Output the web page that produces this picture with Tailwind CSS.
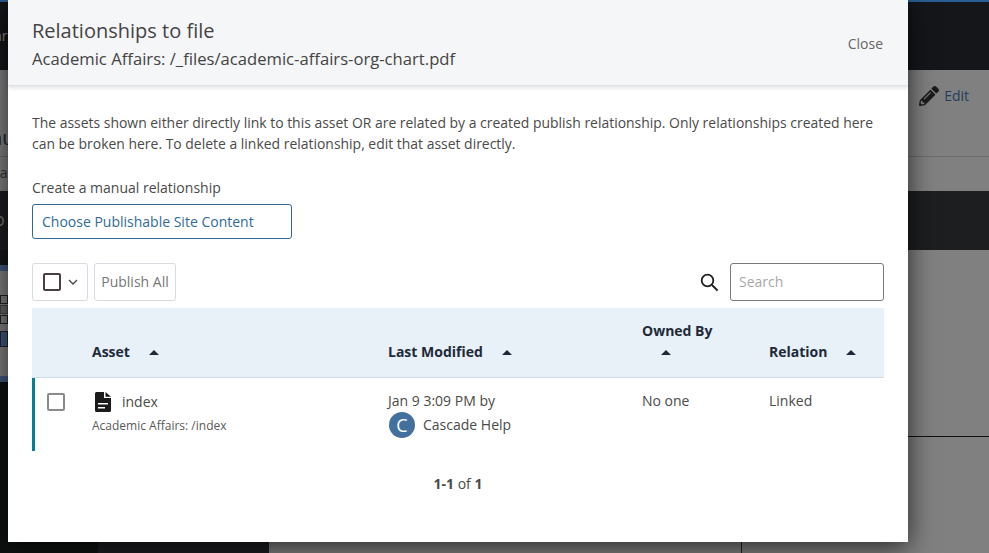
<!DOCTYPE html>
<html lang="en">
<head>
    <meta charset="UTF-8">
    <title>Relationships to file</title>
    <script src="https://cdn.jsdelivr.net/npm/@tailwindcss/browser@4"></script>
</head>
<body class="font-['Open_Sans',sans-serif] overflow-hidden">
<div class="relative w-[989px] h-[553px] overflow-hidden bg-[#808080]">

    <!-- Page behind the modal -->
    <div class="h-[70px] bg-[#14161a] border-t-2 border-[#2a5f96] text-[#8a8f96] text-sm pt-[24px] ml-[-6px]">ar</div>
    <div class="h-[87px] border-b border-[#6c6c6c] flex items-start text-sm">
        <span class="mt-[54px] ml-[-10px] text-[#222] text-xl">nu</span>
        <div class="ml-auto flex items-start pt-[15px] pr-5 gap-[5px] text-[#1f3d5c]">
            <svg class="w-[20px] h-[20px] mt-[1px]" viewBox="0 0 512 512" fill="#1a1a1a"><path d="M497.9 142.1l-46.1 46.1c-4.7 4.7-12.3 4.7-17 0l-111-111c-4.7-4.7-4.7-12.3 0-17l46.1-46.1c18.7-18.7 49.1-18.7 67.9 0l60.1 60.1c18.8 18.7 18.8 49.1 0 67.9zM284.2 99.8L21.6 362.4.4 483.9c-2.9 16.4 11.4 30.6 27.8 27.8l121.5-21.3 262.6-262.6c4.7-4.7 4.7-12.3 0-17l-111-111c-4.8-4.7-12.4-4.7-17.1 0zM124.1 339.9c-5.500-5.500-5.500-14.300 0-19.800l154-154c5.500-5.500 14.300-5.500 19.800 0s5.500 14.300 0 19.800l-154 154c-5.500 5.500-14.300 5.500-19.800 0zM88 424h48v36.300l-64.500 11.300-31.100-31.100L51.700 376H88v48z"/></svg>
            <span class="pt-px">Edit</span>
        </div>
    </div>
    <div class="h-[34px] text-sm text-[#333] pt-[6px] ml-[-7px]">ca</div>
    <div class="h-[59px] bg-[#1d1e20] text-[#777] text-lg pt-[14px] ml-[-6px]">o</div>
    <div class="h-[186px]"></div>
    <div class="h-px bg-[#111] ml-[741px]"></div>

    <!-- Left panel behind the modal -->
    <div class="absolute left-0 top-[250px] w-[269px] h-[303px] bg-[#1d1e20] flex flex-col">
        <div class="h-[15px] bg-[#15171a]"></div>
        <div class="h-[6px] bg-[#3f5a80]"></div>
        <div class="h-[105px] bg-[#808080] pt-[24px] flex flex-col gap-[1px]">
            <div class="w-2 h-[9px] border border-[#222]"></div>
            <div class="w-2 h-[9px] border border-[#444] bg-[#666]"></div>
            <div class="w-2 h-[9px] border border-[#222]"></div>
            <div class="w-2 h-[16px] mt-[6px] border border-[#223] bg-[#3f5a80]"></div>
        </div>
        <div class="h-[6px] bg-[#3f5a80]"></div>
        <div class="flex-1 flex">
            <div class="w-[98px] bg-[#0f1111]"></div>
            <div class="flex-1 bg-[#1d1e20]"></div>
        </div>
    </div>
    <div class="absolute left-[741px] bottom-0 w-px h-[11px] bg-[#222]"></div>

    <!-- Modal -->
    <div class="absolute left-2 top-0 w-[900px] h-[542px] bg-white shadow-[0_5px_25px_rgba(0,0,0,0.7)] text-[#4a4a4a]">
        <div class="h-[86px] bg-[#f5f6f8] border-b border-[#dfe3e8] shadow-[0_2px_4px_rgba(0,0,0,0.12)] pl-6 pr-[25px] flex items-start justify-between">
            <div class="pt-[17px]">
                <h1 class="text-xl leading-7 text-[#444]">Relationships to file</h1>
                <p class="text-[16.65px] leading-6 mt-[2px] text-[#444]">Academic Affairs: /_files/academic-affairs-org-chart.pdf</p>
            </div>
            <button class="text-sm leading-5 text-[#666] mt-[34px]">Close</button>
        </div>

        <div class="px-6">
            <p class="text-[13.95px] leading-[21px] mt-[26px] text-[#4a4a4a]">The assets shown either directly link to this asset OR are related by a created publish relationship. Only relationships created here can be broken here. To delete a linked relationship, edit that asset directly.</p>
            <label class="block text-sm leading-5 mt-6 text-[#4a4a4a]">Create a manual relationship</label>
            <button class="block w-[260px] h-[35px] mt-[6px] border border-[#2f6a99] rounded-[3px] text-left pl-[9px] text-sm text-[#2f6a99]">Choose Publishable Site Content</button>

            <div class="flex items-center mt-6 h-[38px]">
                <div class="w-[56px] h-[38px] border border-[#d8dce1] rounded-[3px] flex items-center pl-[10px] gap-[7px]">
                    <span class="w-[18px] h-[18px] border-2 border-[#4a4044] rounded-[2px]"></span>
                    <svg class="w-[10px] h-[6px]" viewBox="0 0 10 6" fill="none" stroke="#444" stroke-width="1.3"><path d="M1 1l4 4 4-4"/></svg>
                </div>
                <button class="ml-[6px] w-[82px] h-[38px] border border-[#d8dce1] rounded-[3px] text-sm text-[#777]">Publish All</button>
                <svg class="ml-auto w-[19px] h-[19px] mr-[11px]" viewBox="0 0 19 19" fill="none" stroke="#1f1f1f" stroke-width="1.8"><circle cx="7.5" cy="7.5" r="5.8"/><path d="M12 12l5.600 5.600" stroke-width="2"/></svg>
                <input class="w-[154px] h-[38px] border border-[#7a7a7a] rounded-[3px] pl-2 pr-[9px] pb-[2px] text-sm" placeholder="Search">
            </div>

            <table class="w-[852px] mt-[7px] table-fixed border-separate border-spacing-0">
                <thead>
                    <tr class="h-[70px] text-sm text-[#1e2a38]">
                        <th class="w-[60px] bg-[#e8f0f8] border-b border-[#d5dee8]"></th>
                        <th class="w-[296px] bg-[#e8f0f8] border-b border-[#d5dee8] text-left align-bottom pb-[15px] font-bold"><span>Asset</span><span class="inline-block ml-[19px] mb-[2px] border-x-[5px] border-x-transparent border-b-[5px] border-b-[#1e2a38]"></span></th>
                        <th class="w-[254px] bg-[#e8f0f8] border-b border-[#d5dee8] text-left align-bottom pb-[15px] font-bold"><span>Last Modified</span><span class="inline-block ml-[19px] mb-[2px] border-x-[5px] border-x-transparent border-b-[5px] border-b-[#1e2a38]"></span></th>
                        <th class="w-[127px] bg-[#e8f0f8] border-b border-[#d5dee8] text-left align-bottom pb-[15px] font-bold leading-[21px]"><div>Owned By</div><span class="inline-block ml-[19px] mb-[2px] border-x-[5px] border-x-transparent border-b-[5px] border-b-[#1e2a38]"></span></th>
                        <th class="bg-[#e8f0f8] border-b border-[#d5dee8] text-left align-bottom pb-[15px] font-bold"><span>Relation</span><span class="inline-block ml-[19px] mb-[2px] border-x-[5px] border-x-transparent border-b-[5px] border-b-[#1e2a38]"></span></th>
                    </tr>
                </thead>
                <tbody>
                    <tr class="h-[73px] text-sm text-[#4a4a4a]">
                        <td class="border-l-[3px] border-[#00829b] align-top pt-[15px] pl-[12px]">
                            <span class="block w-[18px] h-[18px] border-[2.5px] border-[#8a8a8a] rounded-[2px]"></span>
                        </td>
                        <td class="align-top pt-[12px]">
                            <div class="flex items-center gap-[11px] h-[24px]">
                                <svg class="ml-[3px] w-[16px] h-[20px]" viewBox="0 0 16 20"><path fill="#1a1a1a" d="M1.500 0H9v6h7v12.500a1.500 1.500 0 0 1-1.500 1.500h-13A1.500 1.500 0 0 1 0 18.500v-17A1.500 1.500 0 0 1 1.500 0zM10.500 0l5.500 4.700H10.500z"/><path fill="#fff" d="M3 11h10v1.500H3zM3 15h7v1.500H3z"/></svg>
                                <span>index</span>
                            </div>
                            <div class="text-xs leading-4 mt-[4px] text-[#5a5a5a]">Academic Affairs: /index</div>
                        </td>
                        <td class="align-top pt-[13px]">
                            <div class="leading-5">Jan 9 3:09 PM by</div>
                            <div class="flex items-center gap-[8px] mt-[1px] ml-px">
                                <span class="w-[26px] h-[26px] rounded-full bg-[#43719d] text-white text-lg flex items-center justify-center">C</span>
                                <span>Cascade Help</span>
                            </div>
                        </td>
                        <td class="align-top pt-[13px] leading-5">No one</td>
                        <td class="align-top pt-[13px] leading-5">Linked</td>
                    </tr>
                </tbody>
            </table>

            <div class="text-center text-sm mt-[23px] leading-5 text-[#4a4a4a]"><b>1-1</b> of <b>1</b></div>
        </div>
    </div>
</div>
</body>
</html>
